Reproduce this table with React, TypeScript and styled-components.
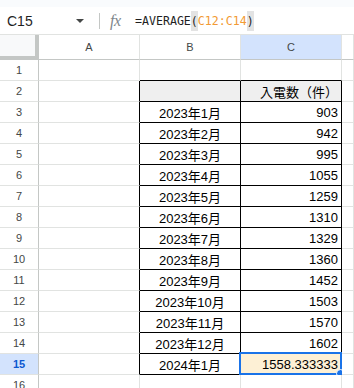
import React from "react";
import styled, { createGlobalStyle } from "styled-components";

const GlobalStyle = createGlobalStyle`
  html, body {
    margin: 0;
    padding: 0;
    background: #fff;
  }
  body {
    font-family: "Liberation Sans", Arial, "Noto Sans CJK JP", sans-serif;
  }
`;

const Page = styled.div`
  width: 354px;
  height: 388px;
  overflow: hidden;
  background: #fff;
`;

const TopStrip = styled.div`
  height: 7px;
  background: #f9fbfd;
`;

const FormulaBar = styled.div`
  height: 27px;
  display: flex;
  align-items: center;
  border-bottom: 1px solid #e1e3e1;
  background: #fff;
`;

const NameBox = styled.div`
  width: 92px;
  display: flex;
  align-items: center;
  justify-content: space-between;
  padding: 0 8px 0 7px;
  box-sizing: border-box;
  font-size: 14px;
  color: #1f1f1f;
`;

const Caret = styled.span`
  width: 0;
  height: 0;
  border-left: 4px solid transparent;
  border-right: 4px solid transparent;
  border-top: 4px solid #444746;
`;

const Divider = styled.span`
  width: 1px;
  height: 16px;
  background: #c4c7c5;
  margin-left: 7px;
`;

const Fx = styled.span`
  margin-left: 10px;
  width: 25px;
  font-family: "Liberation Serif", serif;
  font-style: italic;
  font-size: 16px;
  color: #80868b;
  letter-spacing: -0.5px;
`;

const Formula = styled.div`
  font-family: "DejaVu Sans Mono", "Liberation Mono", monospace;
  font-size: 11.6px;
  color: #1f1f1f;
  display: flex;
  align-items: center;
  height: 20px;
`;

const Ref = styled.span`
  color: #f29a33;
`;

const Paren = styled.span`
  background: #e3e3e3;
  padding: 3px 0;
`;

const Grid = styled.div`
  display: grid;
  grid-template-columns: 39px 101px 101px 101px 1fr;
`;

const Corner = styled.div`
  height: 25px;
  box-sizing: border-box;
  background: #f8f9fa;
  border-right: 4px solid #c4c7c5;
  border-bottom: 4px solid #c4c7c5;
`;

const ColHead = styled.div<{ $active?: boolean }>`
  height: 25px;
  box-sizing: border-box;
  display: flex;
  align-items: center;
  justify-content: center;
  font-size: 11px;
  color: #444746;
  background: ${(p) => (p.$active ? "#d3e3fd" : "#fff")};
  border-right: 1px solid #e1e3e1;
  border-bottom: 1px solid #c4c7c5;
`;

const RowHead = styled.div<{ $active?: boolean }>`
  height: 21px;
  box-sizing: border-box;
  display: flex;
  align-items: center;
  justify-content: center;
  font-size: 11px;
  font-weight: ${(p) => (p.$active ? 700 : 400)};
  color: ${(p) => (p.$active ? "#0b57d0" : "#444746")};
  background: ${(p) => (p.$active ? "#d3e3fd" : "#fff")};
  border-right: 1px solid #c4c7c5;
  border-bottom: 1px solid #e1e3e1;
`;

const Cell = styled.div<{
  $right: string;
  $bottom: string;
  $bg?: string;
  $align?: "left" | "center" | "right";
}>`
  position: relative;
  height: 21px;
  box-sizing: border-box;
  display: flex;
  align-items: center;
  justify-content: ${(p) =>
    p.$align === "right" ? "flex-end" : p.$align === "center" ? "center" : "flex-start"};
  padding: 0 3px;
  font-size: 13px;
  color: #000;
  white-space: nowrap;
  background: ${(p) => p.$bg || "#fff"};
  border-right: 1px solid ${(p) => p.$right};
  border-bottom: 1px solid ${(p) => p.$bottom};
`;

const Selection = styled.div`
  position: absolute;
  left: -2px;
  top: -2px;
  right: -1px;
  bottom: -1px;
  border: 2px solid #1a73e8;
  pointer-events: none;
`;

const Handle = styled.div`
  position: absolute;
  right: -5px;
  bottom: -5px;
  width: 7px;
  height: 7px;
  border-radius: 50%;
  background: #1a73e8;
  border: 1px solid #fff;
`;

const GRID = "#e1e3e1";
const BLACK = "#000";

const values = [903, 942, 995, 1055, 1259, 1310, 1329, 1360, 1452, 1503, 1570, 1602];

type Row = { b: string; c: string };

const rows: Row[] = [
  { b: "", c: "" },
  { b: "", c: "入電数（件）" },
  ...values.map((v, i) => ({ b: `2023年${i + 1}月`, c: String(v) })),
  { b: "2024年1月", c: "1558.333333" },
  { b: "", c: "" },
];

// table region: rows 2..15, columns B (1) and C (2)
const inTable = (r: number, c: number) => r >= 2 && r <= 15 && (c === 1 || c === 2);

const App = () => {
  return (
    <Page>
      <GlobalStyle />
      <TopStrip />
      <FormulaBar>
        <NameBox>
          C15
          <Caret />
        </NameBox>
        <Divider />
        <Fx>fx</Fx>
        <Formula>
          =AVERAGE<Paren>(</Paren>
          <Ref>C12:C14</Ref>
          <Paren>)</Paren>
        </Formula>
      </FormulaBar>
      <Grid>
        <Corner />
        <ColHead>A</ColHead>
        <ColHead>B</ColHead>
        <ColHead $active>C</ColHead>
        <ColHead />
        {rows.map((row, i) => {
          const r = i + 1;
          const sel = r === 15;
          return (
            <React.Fragment key={r}>
              <RowHead $active={sel}>{r}</RowHead>
              {[0, 1, 2, 3].map((c) => {
                const right = inTable(r, c) || inTable(r, c + 1) ? BLACK : GRID;
                const bottom = inTable(r, c) || inTable(r + 1, c) ? BLACK : GRID;
                const text = c === 1 ? row.b : c === 2 ? row.c : "";
                const bg = r === 2 && inTable(r, c) ? "#efefef" : sel && c === 2 ? "#fdf0d5" : undefined;
                return (
                  <Cell
                    key={c}
                    $right={right}
                    $bottom={bottom}
                    $bg={bg}
                    $align={c === 1 ? "center" : "right"}
                  >
                    {text}
                    {sel && c === 2 && (
                      <Selection>
                        <Handle />
                      </Selection>
                    )}
                  </Cell>
                );
              })}
            </React.Fragment>
          );
        })}
      </Grid>
    </Page>
  );
};

export default App;
